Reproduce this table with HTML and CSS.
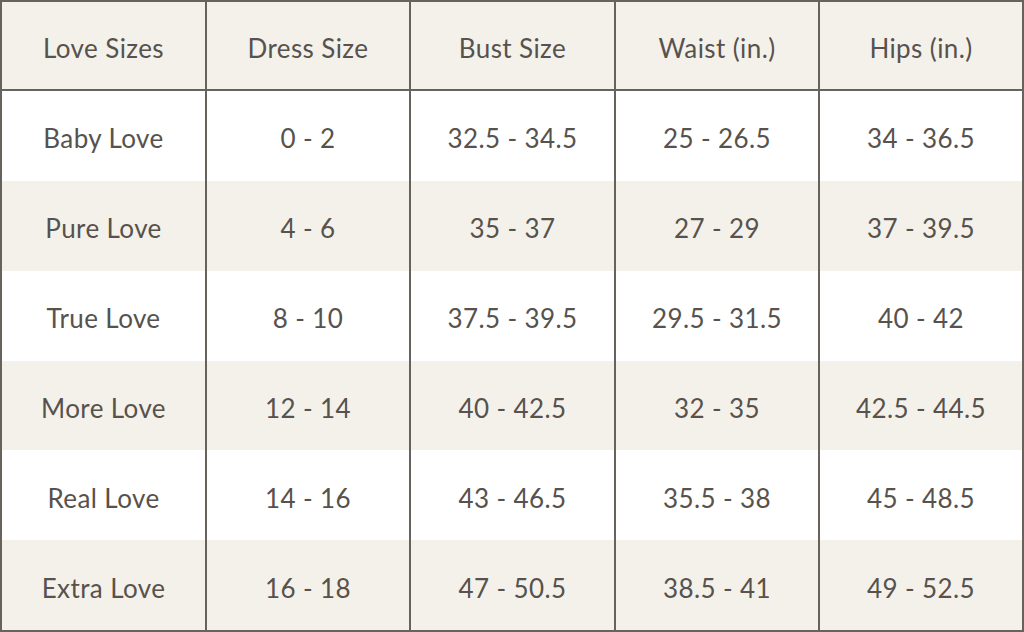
FILE: index.html
```html
<!DOCTYPE html>
<html>
<head>
<meta charset="utf-8">
<link rel="stylesheet" href="styles.css">
</head>
<body>
<div class="chart">
  <div class="row head">
    <div class="cell">Love Sizes</div>
    <div class="cell">Dress Size</div>
    <div class="cell">Bust Size</div>
    <div class="cell">Waist (in.)</div>
    <div class="cell">Hips (in.)</div>
  </div>
  <div class="row">
    <div class="cell">Baby Love</div>
    <div class="cell">0 - 2</div>
    <div class="cell">32.5 - 34.5</div>
    <div class="cell">25 - 26.5</div>
    <div class="cell">34 - 36.5</div>
  </div>
  <div class="row alt">
    <div class="cell">Pure Love</div>
    <div class="cell">4 - 6</div>
    <div class="cell">35 - 37</div>
    <div class="cell">27 - 29</div>
    <div class="cell">37 - 39.5</div>
  </div>
  <div class="row">
    <div class="cell">True Love</div>
    <div class="cell">8 - 10</div>
    <div class="cell">37.5 - 39.5</div>
    <div class="cell">29.5 - 31.5</div>
    <div class="cell">40 - 42</div>
  </div>
  <div class="row alt">
    <div class="cell">More Love</div>
    <div class="cell">12 - 14</div>
    <div class="cell">40 - 42.5</div>
    <div class="cell">32 - 35</div>
    <div class="cell">42.5 - 44.5</div>
  </div>
  <div class="row">
    <div class="cell">Real Love</div>
    <div class="cell">14 - 16</div>
    <div class="cell">43 - 46.5</div>
    <div class="cell">35.5 - 38</div>
    <div class="cell">45 - 48.5</div>
  </div>
  <div class="row alt">
    <div class="cell">Extra Love</div>
    <div class="cell">16 - 18</div>
    <div class="cell">47 - 50.5</div>
    <div class="cell">38.5 - 41</div>
    <div class="cell">49 - 52.5</div>
  </div>
</div>
</body>
</html>
```

FILE: styles.css
```css
html, body {
  margin: 0;
  padding: 0;
  background: #ffffff;
}

.chart {
  box-sizing: border-box;
  width: 1024px;
  height: 632px;
  border: 2px solid #68625c;
  display: grid;
  grid-template-rows: 89px repeat(6, 1fr);
  font-family: Lato, "Noto Sans", sans-serif;
  font-size: 26px;
  color: #57524d;
}

.row {
  display: grid;
  grid-template-columns: 203px 204px 205px 204px 1fr;
  background: #ffffff;
}

.row.head {
  background: #f4f1ea;
  border-bottom: 2px solid #68625c;
}

.row.alt {
  background: #f4f1ea;
}

.cell {
  display: flex;
  align-items: center;
  justify-content: center;
  padding-top: 5px;
  letter-spacing: 0.4px;
}

.cell + .cell {
  border-left: 2px solid #68625c;
}
```
